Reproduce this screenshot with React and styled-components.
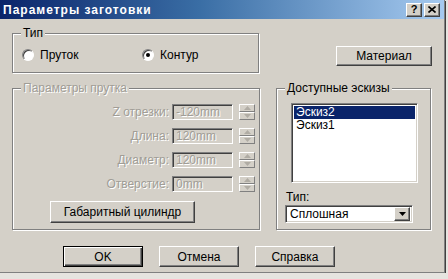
import styled, { createGlobalStyle } from "styled-components";

const GlobalStyle = createGlobalStyle`
  html, body {
    margin: 0;
    padding: 0;
    background: #e6e4e0;
  }
  body {
    font-family: "Liberation Sans", Arial, sans-serif;
    font-size: 12px;
    color: #000;
  }
`;

const Window = styled.div`
  width: 444px;
  height: 272px;
  background: #d4d0c8;
  border-right: 1px solid #808080;
  border-bottom: 1px solid #808080;
  box-shadow: 1px 1px 0 #404040;
  overflow: hidden;
`;

const TitleBar = styled.div`
  height: 19px;
  display: flex;
  align-items: center;
  padding: 0 4px 0 3px;
  background: linear-gradient(to right, #0a246a 0%, #3a6ea5 45%, #a6caf0 100%);
`;

const Title = styled.div`
  flex: 1;
  color: #fff;
  font-weight: bold;
  font-size: 12px;
  letter-spacing: 1px;
`;

const TitleButtons = styled.div`
  display: flex;
  gap: 2px;
`;

const TitleButton = styled.div`
  width: 16px;
  height: 14px;
  box-sizing: border-box;
  background: #d4d0c8;
  border: 1px solid;
  border-color: #fff #404040 #404040 #fff;
  box-shadow: inset -1px -1px #808080;
  display: grid;
  place-items: center;
  font-weight: bold;
  font-size: 11px;
  line-height: 1;
`;

const Body = styled.div`
  padding: 14px 0 0 12px;
`;

const Row = styled.div`
  display: flex;
  align-items: flex-start;
  margin-top: ${(p) => p.$top || 0}px;
  gap: ${(p) => p.$gap || 0}px;
  padding-left: ${(p) => p.$indent || 0}px;
`;

const GroupBox = styled.div`
  position: relative;
  box-sizing: border-box;
  width: ${(p) => p.$w}px;
  height: ${(p) => p.$h}px;
  border: 1px solid #808080;
  box-shadow: inset 1px 1px #fff, 1px 1px #fff;
`;

const Legend = styled.span`
  position: absolute;
  top: -8px;
  left: 8px;
  padding: 0 2px;
  background: #d4d0c8;
  line-height: 14px;
  color: ${(p) => (p.$disabled ? "#a09d96" : "#000")};
  text-shadow: ${(p) => (p.$disabled ? "1px 1px #fff" : "none")};
`;

const Button = styled.div`
  box-sizing: border-box;
  width: ${(p) => p.$w}px;
  height: ${(p) => p.$h || 21}px;
  margin-left: ${(p) => p.$ml || 0}px;
  margin-top: ${(p) => p.$mt || 0}px;
  background: #d4d0c8;
  display: flex;
  align-items: center;
  justify-content: center;
  border: 1px solid;
  border-color: ${(p) => (p.$default ? "#000" : "#fff #404040 #404040 #fff")};
  box-shadow: ${(p) =>
    p.$default
      ? "inset 1px 1px #fff, inset -1px -1px #404040, inset -2px -2px #808080"
      : "inset -1px -1px #808080"};
`;

const RadioRow = styled.div`
  display: flex;
  align-items: center;
  padding: 14px 0 0 9px;
`;

const RadioItem = styled.label`
  display: flex;
  align-items: center;
  gap: 6px;
  width: ${(p) => p.$w}px;
`;

const RadioCircle = styled.span`
  box-sizing: border-box;
  width: 12px;
  height: 12px;
  border-radius: 50%;
  border: 1px solid;
  border-color: #808080 #fff #fff #808080;
  box-shadow: inset 1px 1px #404040;
  background: #fff;
  display: grid;
  place-items: center;
`;

const RadioDot = styled.span`
  width: 4px;
  height: 4px;
  border-radius: 50%;
  background: #000;
`;

const ParamRows = styled.div`
  display: flex;
  flex-direction: column;
  gap: 8px;
  padding-top: 15px;
`;

const ParamRow = styled.div`
  display: flex;
  align-items: center;
  height: 16px;
`;

const DisabledLabel = styled.span`
  width: 156px;
  text-align: right;
  margin-right: 3px;
  color: #a09d96;
  text-shadow: 1px 1px #fff;
  white-space: nowrap;
`;

const Sunken = styled.div`
  box-sizing: border-box;
  width: ${(p) => p.$w}px;
  height: ${(p) => p.$h}px;
  border: 1px solid;
  border-color: #808080 #fff #fff #808080;
  box-shadow: inset 1px 1px #404040, inset -1px -1px #d4d0c8;
  background: ${(p) => (p.$disabled ? "#d4d0c8" : "#fff")};
  margin-left: ${(p) => p.$ml || 0}px;
  margin-top: ${(p) => p.$mt || 0}px;
`;

const FieldText = styled.span`
  display: block;
  padding: 1px 0 0 3px;
  line-height: 13px;
  color: #a09d96;
  text-shadow: 1px 1px #fff;
`;

const Spin = styled.div`
  width: 16px;
  height: 16px;
  margin-left: 6px;
  display: flex;
  flex-direction: column;
`;

const SpinHalf = styled.div`
  box-sizing: border-box;
  flex: 1;
  background: #d4d0c8;
  border: 1px solid;
  border-color: #fff #808080 #808080 #fff;
  display: grid;
  place-items: center;
`;

const ListItem = styled.div`
  height: 13px;
  line-height: 13px;
  padding-left: 2px;
  margin: 0 2px;
  background: ${(p) => (p.$selected ? "#0a246a" : "transparent")};
  color: ${(p) => (p.$selected ? "#fff" : "#000")};
`;

const ListBody = styled.div`
  padding-top: 2px;
`;

const SmallLabel = styled.div`
  margin: 7px 0 0 9px;
  line-height: 14px;
`;

const Combo = styled(Sunken)`
  display: flex;
  align-items: center;
  padding: 2px;
`;

const ComboText = styled.span`
  flex: 1;
  padding-left: 2px;
`;

const ComboButton = styled.div`
  box-sizing: border-box;
  width: 16px;
  height: 14px;
  background: #d4d0c8;
  border: 1px solid;
  border-color: #fff #404040 #404040 #fff;
  box-shadow: inset -1px -1px #808080;
  display: grid;
  place-items: center;
`;

const Arrow = ({ up, color = "#000" }) => (
  <svg width="7" height="4" viewBox="0 0 7 4">
    {up ? (
      <polygon points="0,4 7,4 3.5,0" fill={color} />
    ) : (
      <polygon points="0,0 7,0 3.5,4" fill={color} />
    )}
  </svg>
);

function SpinBox() {
  return (
    <Spin>
      <SpinHalf>
        <Arrow up color="#b0aca4" />
      </SpinHalf>
      <SpinHalf>
        <Arrow color="#b0aca4" />
      </SpinHalf>
    </Spin>
  );
}

const params = [
  ["Z отрезки:", "-120mm"],
  ["Длина:", "120mm"],
  ["Диаметр:", "120mm"],
  ["Отверстие:", "0mm"],
];

export default function App() {
  return (
    <>
      <GlobalStyle />
      <Window>
        <TitleBar>
          <Title>Параметры заготовки</Title>
          <TitleButtons>
            <TitleButton>?</TitleButton>
            <TitleButton>
              <svg width="8" height="7" viewBox="0 0 8 7">
                <path d="M0.5 0.5 L7.5 6.5 M7.5 0.5 L0.5 6.5" stroke="#000" strokeWidth="1.6" />
              </svg>
            </TitleButton>
          </TitleButtons>
        </TitleBar>
        <Body>
          <Row>
            <GroupBox $w={247} $h={40}>
              <Legend>Тип</Legend>
              <RadioRow>
                <RadioItem $w={120}>
                  <RadioCircle />
                  Пруток
                </RadioItem>
                <RadioItem>
                  <RadioCircle>
                    <RadioDot />
                  </RadioCircle>
                  Контур
                </RadioItem>
              </RadioRow>
            </GroupBox>
            <Button $w={96} $h={20} $ml={77} $mt={13}>
              Материал
            </Button>
          </Row>

          <Row $top={15} $gap={16}>
            <GroupBox $w={248} $h={142}>
              <Legend $disabled>Параметры прутка</Legend>
              <ParamRows>
                {params.map(([label, value]) => (
                  <ParamRow key={label}>
                    <DisabledLabel>{label}</DisabledLabel>
                    <Sunken $w={61} $h={16} $disabled>
                      <FieldText>{value}</FieldText>
                    </Sunken>
                    <SpinBox />
                  </ParamRow>
                ))}
              </ParamRows>
              <Button $w={145} $h={22} $ml={37} $mt={9}>
                Габаритный цилиндр
              </Button>
            </GroupBox>

            <GroupBox $w={155} $h={142}>
              <Legend>Доступные эскизы</Legend>
              <Sunken $w={127} $h={80} $ml={14} $mt={14}>
                <ListBody>
                  <ListItem $selected>Эскиз2</ListItem>
                  <ListItem>Эскиз1</ListItem>
                </ListBody>
              </Sunken>
              <SmallLabel>Тип:</SmallLabel>
              <Combo $w={128} $h={18} $ml={8} $mt={1}>
                <ComboText>Сплошная</ComboText>
                <ComboButton>
                  <Arrow />
                </ComboButton>
              </Combo>
            </GroupBox>
          </Row>

          <Row $top={16} $gap={16} $indent={51}>
            <Button $w={80} $default>
              OK
            </Button>
            <Button $w={80}>Отмена</Button>
            <Button $w={80}>Справка</Button>
          </Row>
        </Body>
      </Window>
    </>
  );
}
